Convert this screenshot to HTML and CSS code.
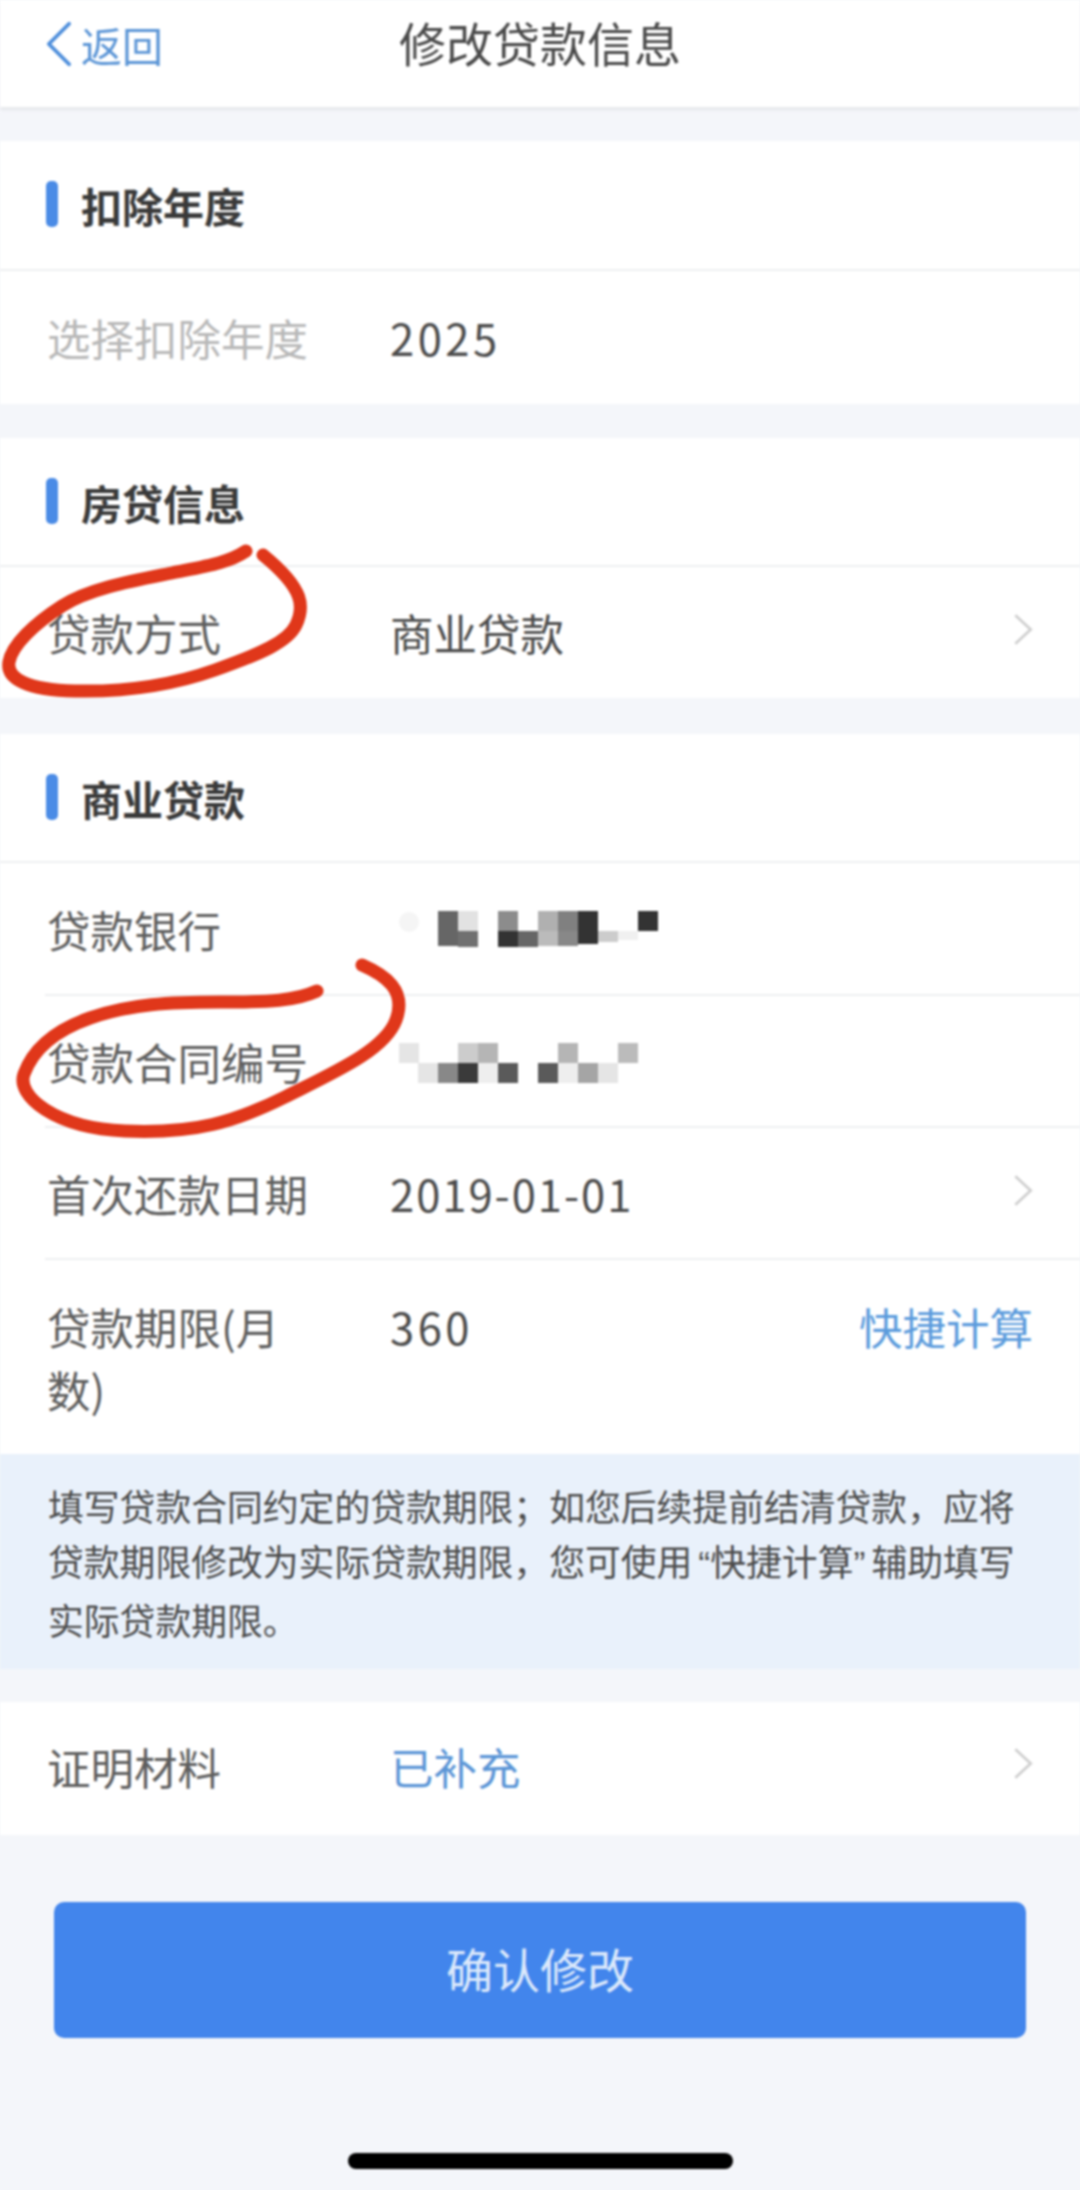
FILE: index.html
```html
<!DOCTYPE html>
<html lang="zh-CN">
<head>
<meta charset="utf-8">
<title>修改贷款信息</title>
<link rel="stylesheet" href="styles.css">
</head>
<body>
<div class="page">
  <header class="nav">
    <a class="back">
      <svg class="back-icon" viewBox="0 0 28 46"><path d="M25 2 L4 23 L25 44"/></svg>
      <span>返回</span>
    </a>
    <h1 class="nav-title">修改贷款信息</h1>
  </header>

  <section class="card card-first">
    <h2 class="head">扣除年度</h2>
    <div class="row"><span class="label muted">选择扣除年度</span><span class="value num">2025</span></div>
  </section>

  <section class="card card-second">
    <h2 class="head">房贷信息</h2>
    <div class="row"><span class="label">贷款方式</span><span class="value">商业贷款</span>
      <svg class="chev" viewBox="0 0 18 30"><path d="M2 2 L16 15 L2 28"/></svg></div>
  </section>

  <section class="card">
    <h2 class="head">商业贷款</h2>
    <div class="row row-inset"><span class="label">贷款银行</span>
      <svg class="mosaic" viewBox="0 0 240 40">
        <circle cx="11" cy="11" r="10" fill="#f5f5f5"/>
        <rect x="40" y="0" width="20" height="20" fill="#666"/><rect x="60" y="0" width="20" height="20" fill="#e2e2e2"/>
        <rect x="100" y="0" width="20" height="20" fill="#8c8c8c"/><rect x="140" y="0" width="20" height="20" fill="#b0b0b0"/>
        <rect x="160" y="0" width="20" height="20" fill="#808080"/><rect x="180" y="0" width="20" height="20" fill="#333"/>
        <rect x="240" y="0" width="20" height="20" fill="#333"/>
        <rect x="40" y="20" width="20" height="15" fill="#666"/><rect x="60" y="20" width="20" height="16" fill="#707070"/>
        <rect x="100" y="20" width="20" height="16" fill="#333"/><rect x="120" y="20" width="20" height="16" fill="#666"/>
        <rect x="140" y="20" width="20" height="15" fill="#bbb"/><rect x="160" y="20" width="20" height="15" fill="#888"/>
        <rect x="180" y="20" width="20" height="13" fill="#333"/><rect x="200" y="20" width="20" height="11" fill="#ccc"/>
        <rect x="220" y="20" width="20" height="9" fill="#f0f0f0"/>
      </svg></div>
    <div class="row row-inset"><span class="label">贷款合同编号</span>
      <svg class="mosaic" viewBox="0 0 240 40">
        <rect x="1" y="0" width="20" height="20" fill="#e5e5e5"/><rect x="60" y="0" width="20" height="20" fill="#ccc"/>
        <rect x="80" y="0" width="20" height="20" fill="#b5b5b5"/><rect x="160" y="0" width="20" height="20" fill="#b5b5b5"/>
        <rect x="220" y="0" width="20" height="20" fill="#bbb"/>
        <rect x="20" y="20" width="20" height="20" fill="#e5e5e5"/><rect x="40" y="20" width="20" height="20" fill="#888"/>
        <rect x="60" y="20" width="20" height="20" fill="#3a3a3a"/><rect x="80" y="20" width="20" height="20" fill="#eee"/>
        <rect x="100" y="20" width="20" height="20" fill="#5a5a5a"/><rect x="140" y="20" width="20" height="20" fill="#5a5a5a"/>
        <rect x="160" y="20" width="20" height="20" fill="#eee"/><rect x="180" y="20" width="20" height="20" fill="#a5a5a5"/>
        <rect x="200" y="20" width="20" height="20" fill="#e5e5e5"/>
      </svg></div>
    <div class="row row-inset"><span class="label">首次还款日期</span><span class="value date">2019-01-01</span>
      <svg class="chev" viewBox="0 0 18 30"><path d="M2 2 L16 15 L2 28"/></svg></div>
    <div class="row row-top"><span class="label">贷款期限(月数)</span><span class="value num">360</span><span class="action">快捷计算</span></div>
  </section>

  <p class="info">填写贷款合同约定的贷款期限；如您后续提前结清贷款，应将贷款期限修改为实际贷款期限，您可使用<span class="q">“快捷计算”</span>辅助填写实际贷款期限。</p>

  <section class="card card-proof">
    <div class="row"><span class="label">证明材料</span><span class="value link">已补充</span>
      <svg class="chev" viewBox="0 0 18 30"><path d="M2 2 L16 15 L2 28"/></svg></div>
  </section>

  <button class="confirm" type="button">确认修改</button>
  <div class="home-bar"></div>

  <svg class="ink" viewBox="0 0 1080 2190">
    <path d="M246 551 C228 563 207 566 172 573 S90 588 62 606 S12 645 9 662 S28 690 75 691 S170 686 215 670 S288 642 296 625 S306 590 263 555"/>
    <path d="M317 991 C295 1001 270 1002 220 1002 S130 1004 90 1018 S32 1052 24 1074 S55 1128 125 1131 S235 1122 285 1097 S385 1050 396 1020 S385 975 362 965"/>
  </svg>
</div>
</body>
</html>
```
FILE: styles.css
```css
* { box-sizing: border-box; margin: 0; padding: 0; }
html, body { width: 1080px; height: 2190px; overflow: hidden; }
body {
  background: #f4f6fa;
  font-family: "Noto Sans CJK SC", "Noto Sans", sans-serif;
  color: #555;
}
.page {
  position: relative;
  width: 1080px;
  height: 2190px;
  display: flex;
  flex-direction: column;
  background: #f4f6fa;
  filter: blur(0.8px);
}
.nav {
  position: relative;
  height: 107px;
  flex: none;
  background: #fff;
  display: flex;
  align-items: center;
  justify-content: center;
  box-shadow: 0 3px 3px #e6e8ec;
}
.back {
  position: absolute;
  left: 45px;
  top: 0;
  height: 88px;
  display: flex;
  align-items: center;
  gap: 9px;
  color: #5b95d6;
  font-size: 41px;
}
.back-icon { width: 27px; height: 46px; }
.back-icon path { fill: none; stroke: #4f8fdc; stroke-width: 4; stroke-linecap: round; stroke-linejoin: round; }
.nav-title {
  font-size: 47px;
  font-weight: 400;
  color: #4a4a4a;
  margin-top: -24px;
}
.card { background: #fff; margin-top: 36px; flex: none; }
.card-first { margin-top: 34px; }
.card-second { margin-top: 34px; }
.card-proof { margin-top: 33px; }
.head {
  height: 129px;
  display: flex;
  align-items: center;
  padding-left: 81px;
  position: relative;
  font-size: 41px;
  font-weight: 700;
  color: #3a3a3a;
  border-bottom: 2px solid #eeeff1;
}
.card-first .head { height: 130px; }
.head::before {
  content: "";
  position: absolute;
  left: 46px;
  top: 40px;
  width: 12px;
  height: 46px;
  border-radius: 5px;
  background: #4a8be6;
}
.row {
  height: 132px;
  display: flex;
  align-items: center;
  padding: 0 47px 0 47px;
  font-size: 43.5px;
}
.card-first .row { height: 133px; }
.card-second .row { height: 131px; }
.card-proof .row { height: 133px; padding-bottom: 4px; }
.row-inset { position: relative; }
.row-inset::after {
  content: "";
  position: absolute;
  left: 45px;
  right: 0;
  bottom: -1px;
  height: 2px;
  background: #eeeff1;
}
.row-top { height: 195px; align-items: flex-start; padding-top: 36px; line-height: 63px; }
.label { flex: none; width: 265px; margin-right: 78px; color: #5e5e5e; line-height: 63px; }
.muted { color: #b8b8b8; }
.value { flex: 1; color: #4c4c4c; line-height: 63px; }
.num { letter-spacing: 3.5px; }
.date { letter-spacing: 2px; }
.link { color: #5b95d6; }
.action { color: #5b9bdc; flex: none; line-height: 63px; }
.chev { width: 20px; height: 33px; flex: none; margin-top: -6px; }
.chev path { fill: none; stroke: #cfcfcf; stroke-width: 2.5; }
.mosaic { width: 240px; height: 40px; flex: none; overflow: visible; margin: 3px 0 0 8px; }
.info {
  flex: none;
  height: 215px;
  padding: 24px 48px 0;
  background: #e9f1fb;
  font-size: 35.8px;
  line-height: 55px;
  color: #4c4c4c;
}
.q { padding: 0 6px; font-family: "Liberation Sans", "Noto Sans CJK SC", sans-serif; }
.confirm {
  flex: none;
  margin: 67px 0 0 54px;
  width: 972px;
  height: 136px;
  border: 0;
  border-radius: 10px;
  padding-bottom: 5px;
  background: #4285ec;
  color: #dce9fb;
  font: 400 47px "Noto Sans CJK SC", "Noto Sans", sans-serif;
}
.home-bar {
  flex: none;
  margin: 115px 0 0 348px;
  width: 385px;
  height: 16px;
  border-radius: 8px;
  background: #000;
}
.ink {
  position: absolute;
  left: 0;
  top: 0;
  width: 1080px;
  height: 2190px;
  pointer-events: none;
}
.ink path { fill: none; stroke: #e0371a; stroke-width: 13; stroke-linecap: round; stroke-linejoin: round; }
```
